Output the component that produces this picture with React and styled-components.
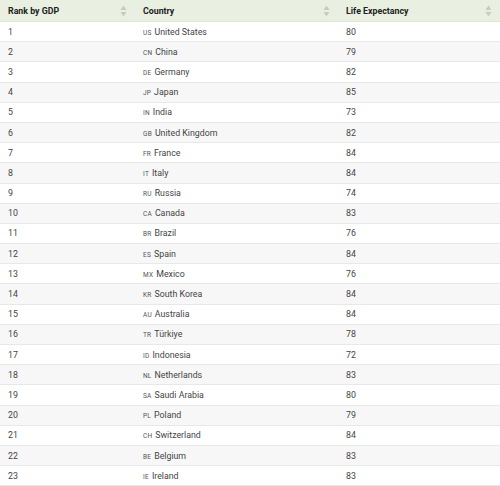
import React from "react";
import styled, { createGlobalStyle } from "styled-components";

const rows = [
  [1, "US", "United States", 80],
  [2, "CN", "China", 79],
  [3, "DE", "Germany", 82],
  [4, "JP", "Japan", 85],
  [5, "IN", "India", 73],
  [6, "GB", "United Kingdom", 82],
  [7, "FR", "France", 84],
  [8, "IT", "Italy", 84],
  [9, "RU", "Russia", 74],
  [10, "CA", "Canada", 83],
  [11, "BR", "Brazil", 76],
  [12, "ES", "Spain", 84],
  [13, "MX", "Mexico", 76],
  [14, "KR", "South Korea", 84],
  [15, "AU", "Australia", 84],
  [16, "TR", "Türkiye", 78],
  [17, "ID", "Indonesia", 72],
  [18, "NL", "Netherlands", 83],
  [19, "SA", "Saudi Arabia", 80],
  [20, "PL", "Poland", 79],
  [21, "CH", "Switzerland", 84],
  [22, "BE", "Belgium", 83],
  [23, "IE", "Ireland", 83],
];

const Global = createGlobalStyle`
  body {
    margin: 0;
    background: #fff;
    font-family: Roboto, "Liberation Sans", sans-serif;
    color: #333;
  }
`;

const Table = styled.div`
  width: 500px;
  height: 486px;
  overflow: hidden;
`;

const Row = styled.div`
  display: grid;
  grid-template-columns: 135px 203px 162px;
  height: ${(p) => (p.$head ? "22px" : "20.2px")};
  align-items: center;
  background: ${(p) => (p.$head ? "#e9f0e2" : p.$odd ? "#fff" : "#f7f7f7")};
  border-bottom: 1px solid ${(p) => (p.$head ? "#dfe6d8" : "#e8e8e8")};
  box-sizing: border-box;
  font-size: 8.8px;
  font-weight: ${(p) => (p.$head ? 700 : 400)};
  color: ${(p) => (p.$head ? "#222" : "#444")};
`;

const Cell = styled.div`
  display: flex;
  align-items: center;
  justify-content: space-between;
  padding: 0 8px;
  white-space: nowrap;
`;

const Code = styled.span`
  font-size: 6.5px;
  color: #555;
  margin-right: 3px;
  letter-spacing: 0.2px;
`;

const SortIcon = () => (
  <svg width="7" height="12" viewBox="0 0 7 12">
    <path d="M3.5 0.5 L6.5 5 L0.5 5 Z" fill="#c6ccc0" />
    <path d="M3.5 11.5 L6.5 7 L0.5 7 Z" fill="#c6ccc0" />
  </svg>
);

export default function App() {
  return (
    <>
      <Global />
      <Table>
        <Row $head>
          <Cell>
            Rank by GDP
            <SortIcon />
          </Cell>
          <Cell>
            Country
            <SortIcon />
          </Cell>
          <Cell>
            Life Expectancy
            <SortIcon />
          </Cell>
        </Row>
        {rows.map(([rank, code, name, life]) => (
          <Row key={rank} $odd={rank % 2 === 1}>
            <Cell>{rank}</Cell>
            <Cell>
              <span>
                <Code>{code}</Code>
                {name}
              </span>
            </Cell>
            <Cell>{life}</Cell>
          </Row>
        ))}
      </Table>
    </>
  );
}
